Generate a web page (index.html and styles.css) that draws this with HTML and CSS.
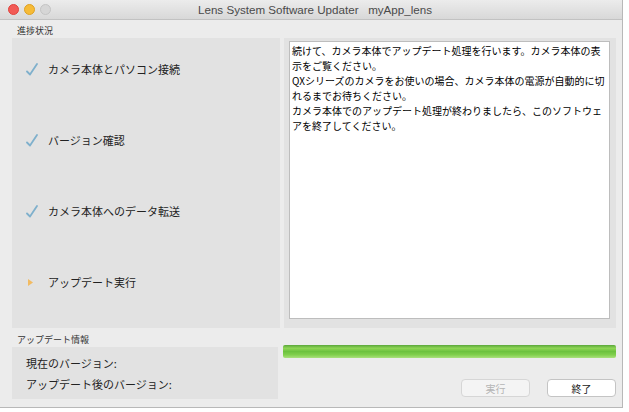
FILE: index.html
```html
<!DOCTYPE html>
<html lang="ja">
  <head>
    <meta charset="UTF-8" />
    <title>Lens System Software Updater</title>
    <link rel="stylesheet" href="styles.css">
  </head>
  <body>
    <div class="window">
      <div class="titlebar">
        <div class="lights">
          <span class="light red"></span>
          <span class="light yellow"></span>
          <span class="light off"></span>
        </div>
        <div class="title">Lens System Software Updater   myApp_lens</div>
      </div>

      <div class="content">
        <div class="group-label">進捗状況</div>
        <div class="main">
          <div class="steps">
            <div class="step">
              <svg class="icon" width="12" height="13" viewBox="0 0 12 13"><path d="M1 8.5 L4 11.5 L11 1" fill="none" stroke="#7fb0cc" stroke-width="1.8" stroke-linecap="round" stroke-linejoin="round"/></svg>
              <span>カメラ本体とパソコン接続</span>
            </div>
            <div class="step">
              <svg class="icon" width="12" height="13" viewBox="0 0 12 13"><path d="M1 8.5 L4 11.5 L11 1" fill="none" stroke="#7fb0cc" stroke-width="1.8" stroke-linecap="round" stroke-linejoin="round"/></svg>
              <span>バージョン確認</span>
            </div>
            <div class="step">
              <svg class="icon" width="12" height="13" viewBox="0 0 12 13"><path d="M1 8.5 L4 11.5 L11 1" fill="none" stroke="#7fb0cc" stroke-width="1.8" stroke-linecap="round" stroke-linejoin="round"/></svg>
              <span>カメラ本体へのデータ転送</span>
            </div>
            <div class="step">
              <svg class="icon" width="12" height="13" viewBox="0 0 12 13"><path d="M2 3 L7 6.5 L2 10 Z" fill="#f2bb62"/></svg>
              <span>アップデート実行</span>
            </div>
          </div>

          <div class="message-panel">
            <div class="message">続けて、カメラ本体でアップデート処理を行います。カメラ本体の表<br>示をご覧ください。<br>QXシリーズのカメラをお使いの場合、カメラ本体の電源が自動的に切<br>れるまでお待ちください。<br>カメラ本体でのアップデート処理が終わりましたら、このソフトウェ<br>アを終了してください。</div>
          </div>
        </div>

        <div class="bottom">
          <div class="info-col">
            <div class="group-label">アップデート情報</div>
            <div class="info">
              <div>現在のバージョン:</div>
              <div>アップデート後のバージョン:</div>
            </div>
          </div>
          <div class="action-col">
            <div class="progress"></div>
            <div class="buttons">
              <button class="btn" disabled>実行</button>
              <button class="btn">終了</button>
            </div>
          </div>
        </div>
      </div>
    </div>
  </body>
</html>
```

FILE: styles.css
```css
body {
  margin: 0;
  background: #ffffff;
  font-family: "Noto Sans CJK JP", "Liberation Sans", sans-serif;
  color: #222;
}
.window {
  width: 623px;
  height: 408px;
  background: #ececec;
  border-right: 1px solid #b8b8b8;
  border-bottom: 1px solid #b8b8b8;
  box-sizing: border-box;
  display: flex;
  flex-direction: column;
}
.titlebar {
  height: 20px;
  flex: none;
  display: flex;
  align-items: center;
  background: linear-gradient(#ececec, #d8d8d8);
  border-bottom: 1px solid #c2c2c2;
  box-sizing: border-box;
}
.lights {
  display: flex;
  gap: 5px;
  padding-left: 8px;
  width: 60px;
}
.light {
  width: 11px;
  height: 11px;
  border-radius: 50%;
  box-sizing: border-box;
}
.red {
  background: #f25a55;
  border: 1px solid #e0443e;
}
.yellow {
  background: #f6bb37;
  border: 1px solid #dea123;
}
.off {
  background: #d6d6d6;
  border: 1px solid #c4c4c4;
}
.title {
  flex: 1;
  text-align: center;
  margin-right: 60px;
  font-family: "Liberation Sans", sans-serif;
  font-size: 11.6px;
  color: #4a4a4a;
  white-space: pre;
}
.content {
  padding: 0 6px 0 12px;
}
.group-label {
  font-size: 9px;
  line-height: 14px;
  height: 14px;
  padding: 4px 0 0 5px;
  color: #333;
}
.main {
  display: flex;
  gap: 4px;
  height: 290px;
}
.steps {
  width: 268px;
  background: #e2e2e2;
  padding: 22px 0 0 14px;
  box-sizing: border-box;
  display: flex;
  flex-direction: column;
  gap: 53px;
}
.step {
  display: flex;
  align-items: center;
  height: 18px;
  font-size: 11px;
  color: #222;
}
.step .icon {
  flex: none;
  margin-right: 10px;
}
.message-panel {
  flex: 1;
  background: #e2e2e2;
  padding: 3px 6px 9px 5px;
  box-sizing: border-box;
  display: flex;
}
.message {
  flex: 1;
  background: #fff;
  border: 1px solid #bdbdbd;
  padding: 1px 2px;
  font-size: 10px;
  line-height: 15px;
  white-space: nowrap;
  color: #000;
}
.bottom {
  display: flex;
  gap: 6px;
  padding-top: 1px;
}
.info-col {
  width: 266px;
}
.info {
  height: 52px;
  background: #e2e2e2;
  padding: 6px 0 0 14px;
  box-sizing: border-box;
  font-size: 11px;
  line-height: 21px;
}
.action-col {
  flex: 1;
  padding-top: 16px;
}
.progress {
  height: 13px;
  margin-left: -1px;
  border-radius: 2px;
  background: linear-gradient(#5aa63a, #8fd655 25%, #6cc23e 50%, #80cf4c 75%, #a9e07c);
}
.buttons {
  display: flex;
  justify-content: flex-end;
  gap: 17px;
  margin-top: 21px;
}
.btn {
  width: 69px;
  height: 18px;
  padding: 0;
  border: 1px solid #c4c4c4;
  border-radius: 4px;
  background: #fff;
  font-family: "Noto Sans CJK JP", sans-serif;
  font-size: 10px;
  color: #222;
}
.btn:disabled {
  background: #f4f4f4;
  color: #b5b5b5;
  border-color: #d6d6d6;
}
```
